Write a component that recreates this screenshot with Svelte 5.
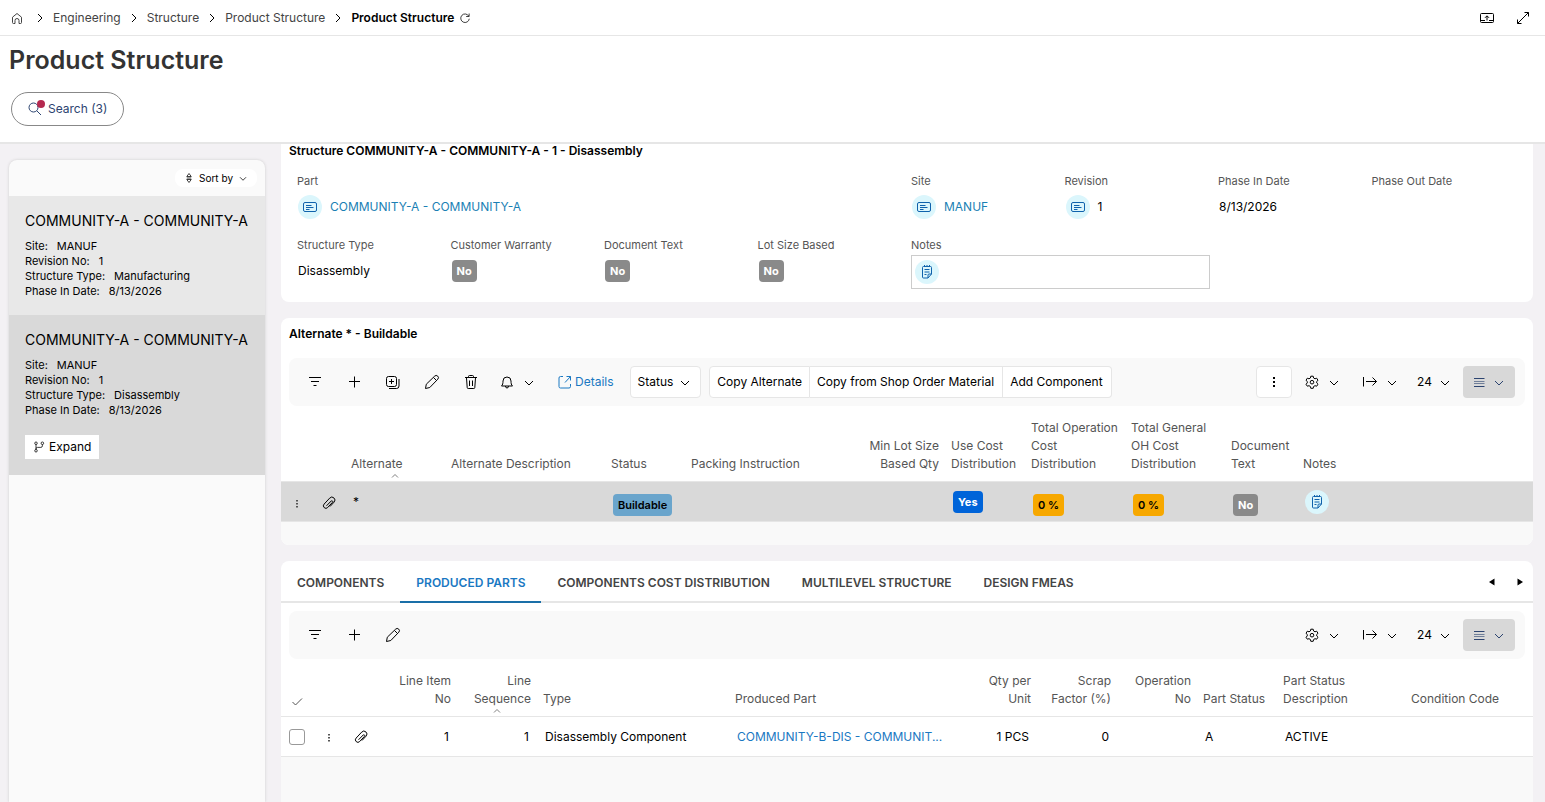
<script>
    const crumbs = ['Engineering', 'Structure', 'Product Structure']

    const cards = [
        { type: 'Manufacturing', active: false },
        { type: 'Disassembly', active: true },
    ]

    const tabs = ['COMPONENTS', 'PRODUCED PARTS', 'COMPONENTS COST DISTRIBUTION', 'MULTILEVEL STRUCTURE', 'DESIGN FMEAS']

    let activeTab = $state('PRODUCED PARTS')
    let notes = $state('')
    let pageSize = $state('24')

    const alternateColumns = [
        { lines: [], width: 32 },
        { lines: [], width: 32 },
        { lines: ['Alternate'], width: 100, sorted: true },
        { lines: ['Alternate Description'], width: 160 },
        { lines: ['Status'], width: 80 },
        { lines: ['Packing Instruction'], width: 160 },
        { lines: ['Min Lot Size', 'Based Qty'], width: 100, right: true },
        { lines: ['Use Cost', 'Distribution'], width: 80 },
        { lines: ['Total Operation', 'Cost', 'Distribution'], width: 100 },
        { lines: ['Total General', 'OH Cost', 'Distribution'], width: 100 },
        { lines: ['Document', 'Text'], width: 72 },
        { lines: ['Notes'] },
    ]

    const partColumns = [
        { lines: [], width: 32, check: true },
        { lines: [], width: 32 },
        { lines: [], width: 32 },
        { lines: ['Line Item', 'No'], width: 80, right: true },
        { lines: ['Line', 'Sequence'], width: 80, right: true, sorted: true },
        { lines: ['Type'], width: 192 },
        { lines: ['Produced Part'], width: 228 },
        { lines: ['Qty per', 'Unit'], width: 80, right: true },
        { lines: ['Scrap', 'Factor (%)'], width: 80, right: true },
        { lines: ['Operation', 'No'], width: 80, right: true },
        { lines: ['Part Status'], width: 80 },
        { lines: ['Part Status', 'Description'], width: 128 },
        { lines: ['Condition Code'] },
    ]
</script>

{#snippet icon(name)}
    <svg class="icon" viewBox="0 0 16 16" aria-hidden="true">
        {#if name === 'home'}
            <path d="M3.500 7.200 8 3.500l4.500 3.700v5.300a1 1 0 0 1-1 1H10V10.500a2 2 0 0 0-4 0v3H4.500a1 1 0 0 1-1-1Z" />
        {:else if name === 'refresh'}
            <path d="M13 5.500A5.700 5.700 0 1 0 13.700 9M13.500 2v4H9.500" />
        {:else if name === 'present'}
            <rect x="1.500" y="3.500" width="13" height="9" rx="1" />
            <path d="M1.500 10.500h4.500M10 10.500h4.500M8 10.500V6M6 7.800 8 5.800l2 2" />
        {:else if name === 'resize'}
            <path d="M2.500 13.500l11-11M9.500 2.500h4v4M2.500 9.500v4h4" />
        {:else if name === 'search'}
            <circle cx="6.500" cy="6.500" r="4.500" />
            <path d="M9.800 9.800 14 14" />
        {:else if name === 'sort'}
            <path d="M5 6 8 2l3 4ZM5 10 8 14l3-4ZM5 8h6" />
        {:else if name === 'branch'}
            <circle cx="4" cy="3" r="1.700" />
            <circle cx="4" cy="13" r="1.700" />
            <circle cx="12.500" cy="3" r="1.700" />
            <path d="M4 4.700v6.600M12.500 4.700v1.800a2 2 0 0 1-2 2H6a2 2 0 0 0-2 2" />
        {:else if name === 'filter'}
            <path d="M2 3.500h12M4 7.500h8M6.500 11.500h3" />
        {:else if name === 'plus'}
            <path d="M8.500 2.500v11M3 7.500h11" />
        {:else if name === 'duplicate'}
            <rect x="1.500" y="2.500" width="10" height="10" rx="2" />
            <path d="M6.500 5v5M4 7.500h5M14 5v7a2.500 2.500 0 0 1-2.500 2.500H4" />
        {:else if name === 'pencil'}
            <path d="M1.500 14.500l.8-4.300 8.300-8a2 2 0 0 1 3.200 3L5.800 13.500ZM9.500 3.500l3 3" />
        {:else if name === 'trash'}
            <path d="M2 3.500h12M5.500 3.500v-1a1 1 0 0 1 1-1h3a1 1 0 0 1 1 1v1M3.500 4l.7 9.500a1 1 0 0 0 1 1h5.600a1 1 0 0 0 1-1L12.500 4M6.500 6.500v5.500M9.500 6.500v5.500" />
        {:else if name === 'bell'}
            <path d="M2.500 12c1.200-1.200 1.500-2.500 1.500-5a4 4 0 0 1 8 0c0 2.500.3 3.800 1.500 5ZM6.500 12a1.500 2 0 0 0 3 0" />
        {:else if name === 'external'}
            <path d="M6 2.500H3.500a1.500 1.500 0 0 0-1.500 1.500v8.500A1.500 1.500 0 0 0 3.500 14H12a1.500 1.500 0 0 0 1.500-1.500V10M8 8.500 13.500 2.500M9.500 2.500h4v4" />
        {:else if name === 'down'}
            <path d="M4 7l4 4 4-4" />
        {:else if name === 'up'}
            <path d="M4 10 8 6l4 4" />
        {:else if name === 'right'}
            <path d="M6 4l4 4-4 4" />
        {:else if name === 'check'}
            <path d="M3.500 10l3 3 6.500-6.500" />
        {:else if name === 'kebab'}
            <path class="solid" d="M7 3h2v2H7ZM7 7h2v2H7ZM7 11h2v2H7Z" />
        {:else if name === 'dots'}
            <path class="solid" d="M7 5h2v1.500H7ZM7 8h2v1.500H7ZM7 11h2v1.500H7Z" />
        {:else if name === 'gear'}
            <path d="M6.800 2.200h2.400l.4 1.800 1.400.8 1.700-.6 1.300 2.100L12.700 7.500v1.400l1.300 1.300-1.300 2-1.700-.5-1.400.8-.4 1.800H6.800l-.4-1.800-1.400-.8-1.700.5-1.300-2 1.300-1.300V7.500L2 6.300l1.300-2.100 1.700.6 1.400-.8Z" />
            <circle cx="8" cy="8.200" r="1.800" />
        {:else if name === 'export'}
            <path d="M1.500 3v9.500M4 7.500h10.500M10.500 3.500l4 4-4 4" />
        {:else if name === 'list'}
            <path d="M3 4.500h10.500M3 12.500h10.500" />
            <path class="faint" d="M3 7.500h10.500M3 9.500h10.500" />
        {:else if name === 'clip'}
            <path d="M5.500 10.800 10.200 6a.9.9 0 0 1 1.300 1.300L6.700 12.500a2.400 2.400 0 0 1-3.600-3.400L8.700 3.100a2.900 2.900 0 0 1 4.400 4L9 11.500" />
        {:else if name === 'card'}
            <rect x="1.500" y="3.500" width="13" height="9" rx="1.500" />
            <path d="M4 6.500h5.500M4 8.500h7.500M4 10.500h3.500" />
        {:else if name === 'note'}
            <path d="M12.500 10V3.500a1 1 0 0 0-1-1h-7a1 1 0 0 0-1 1v9.500a1 1 0 0 0 1 1H9ZM12.500 10H10a1 1 0 0 0-1 1v3M5.500 1v2M8 1v2M10.500 1v2M5.500 5.500h5M5.500 8h5M5.500 10.500h2" />
        {:else if name === 'prev'}
            <path class="solid" d="M10.500 4.500v7L5 8Z" />
        {:else if name === 'next'}
            <path class="solid" d="M5.500 4.500v7L11 8Z" />
        {/if}
    </svg>
{/snippet}

{#snippet iconButton(name, label)}
    <button class="tool" aria-label={label}>{@render icon(name)}</button>
{/snippet}

{#snippet viewTools()}
    <button class="menu" aria-label="Settings">{@render icon('gear')}{@render icon('down')}</button>
    <button class="menu" aria-label="Export">{@render icon('export')}{@render icon('down')}</button>
    <label class="page-size">
        <select bind:value={pageSize} aria-label="Rows per page">
            <option>24</option>
            <option>48</option>
        </select>
        {@render icon('down')}
    </label>
    <button class="menu view" aria-label="View">{@render icon('list')}{@render icon('down')}</button>
{/snippet}

{#snippet tableHead(columns)}
    <colgroup>
        {#each columns as column}
            <col style={column.width ? `width: ${column.width}px` : undefined} />
        {/each}
    </colgroup>
    <thead>
        <tr>
            {#each columns as column}
                <th class:right={column.right} class:check={column.check}>
                    {#each column.lines as line}
                        <span class="line">{line}</span>
                    {/each}
                    {#if column.check}
                        {@render icon('check')}
                    {/if}
                    {#if column.sorted}
                        <span class="sorted">{@render icon('up')}</span>
                    {/if}
                </th>
            {/each}
        </tr>
    </thead>
{/snippet}

<div class="page">
    <header>
        <nav class="breadcrumb">
            <a class="home" href="#home" aria-label="Home">{@render icon('home')}</a>
            {#each crumbs as crumb}
                {@render icon('right')}
                <a href="#crumb">{crumb}</a>
            {/each}
            {@render icon('right')}
            <strong>Product Structure</strong>
            <button class="refresh" aria-label="Refresh">{@render icon('refresh')}</button>
            <div class="window-tools">
                <button aria-label="Present">{@render icon('present')}</button>
                <button aria-label="Full screen">{@render icon('resize')}</button>
            </div>
        </nav>
        <h1>Product Structure</h1>
        <button class="search">
            <span class="search-icon">{@render icon('search')}<i class="dot"></i></span>
            Search (3)
        </button>
    </header>

    <div class="content">
        <aside>
            <div class="sort-bar">
                <button class="sort">{@render icon('sort')}<span>Sort by</span>{@render icon('down')}</button>
            </div>
            {#each cards as card}
                <div class="card" class:active={card.active}>
                    <h3>COMMUNITY-A - COMMUNITY-A</h3>
                    <dl>
                        <div><dt>Site:</dt><dd>MANUF</dd></div>
                        <div><dt>Revision No:</dt><dd>1</dd></div>
                        <div><dt>Structure Type:</dt><dd>{card.type}</dd></div>
                        <div><dt>Phase In Date:</dt><dd>8/13/2026</dd></div>
                    </dl>
                    {#if card.active}
                        <button class="expand">{@render icon('branch')}Expand</button>
                    {/if}
                </div>
            {/each}
        </aside>

        <main>
            <section class="panel details">
                <h2>Structure COMMUNITY-A - COMMUNITY-A - 1 - Disassembly</h2>
                <div class="fields">
                    <div class="field wide">
                        <span class="label">Part</span>
                        <div class="value">
                            <button class="round" aria-label="Part card">{@render icon('card')}</button>
                            <a href="#part">COMMUNITY-A - COMMUNITY-A</a>
                        </div>
                    </div>
                    <div class="field">
                        <span class="label">Site</span>
                        <div class="value">
                            <button class="round" aria-label="Site card">{@render icon('card')}</button>
                            <a href="#site">MANUF</a>
                        </div>
                    </div>
                    <div class="field">
                        <span class="label">Revision</span>
                        <div class="value">
                            <button class="round" aria-label="Revision card">{@render icon('card')}</button>
                            <span>1</span>
                        </div>
                    </div>
                    <div class="field">
                        <span class="label">Phase In Date</span>
                        <div class="value">8/13/2026</div>
                    </div>
                    <div class="field">
                        <span class="label">Phase Out Date</span>
                    </div>
                    <div class="field">
                        <span class="label">Structure Type</span>
                        <div class="value">Disassembly</div>
                    </div>
                    {#each ['Customer Warranty', 'Document Text', 'Lot Size Based'] as label}
                        <div class="field">
                            <span class="label">{label}</span>
                            <div class="value"><span class="badge grey">No</span></div>
                        </div>
                    {/each}
                    <div class="field notes">
                        <label class="label" for="notes">Notes</label>
                        <div class="notes-box">
                            <button class="round" aria-label="Open notes">{@render icon('note')}</button>
                            <input id="notes" type="text" bind:value={notes} />
                        </div>
                    </div>
                </div>
            </section>

            <section class="panel alternate">
                <h2>Alternate * - Buildable</h2>
                <div class="toolbar">
                    {@render iconButton('filter', 'Filter')}
                    {@render iconButton('plus', 'New')}
                    {@render iconButton('duplicate', 'Duplicate')}
                    {@render iconButton('pencil', 'Edit')}
                    {@render iconButton('trash', 'Delete')}
                    <button class="menu bell" aria-label="Subscribe">{@render icon('bell')}{@render icon('down')}</button>
                    <a class="details-link" href="#details">{@render icon('external')}Details</a>
                    <button class="boxed status">Status {@render icon('down')}</button>
                    <div class="group">
                        <button class="boxed">Copy Alternate</button>
                        <button class="boxed">Copy from Shop Order Material</button>
                        <button class="boxed">Add Component</button>
                    </div>
                    <div class="view-tools">
                        <button class="boxed more" aria-label="More">{@render icon('kebab')}</button>
                        {@render viewTools()}
                    </div>
                </div>
                <table>
                    {@render tableHead(alternateColumns)}
                    <tbody>
                        <tr class="selected">
                            <td><button class="row-menu" aria-label="Row menu">{@render icon('dots')}</button></td>
                            <td><button aria-label="Attachments">{@render icon('clip')}</button></td>
                            <td>*</td>
                            <td></td>
                            <td class="low"><span class="badge blue">Buildable</span></td>
                            <td></td>
                            <td></td>
                            <td><span class="badge yes">Yes</span></td>
                            <td class="low"><span class="badge amber">0 %</span></td>
                            <td class="low"><span class="badge amber">0 %</span></td>
                            <td class="low"><span class="badge grey">No</span></td>
                            <td><button class="round" aria-label="Notes">{@render icon('note')}</button></td>
                        </tr>
                    </tbody>
                </table>
                <div class="rest"></div>
            </section>

            <section class="panel parts">
                <div class="tabs">
                    {#each tabs as tab}
                        <button class="tab" class:current={tab === activeTab} onclick={() => activeTab = tab}>{tab}</button>
                    {/each}
                    <div class="tab-arrows">
                        <button aria-label="Previous tab">{@render icon('prev')}</button>
                        <button aria-label="Next tab">{@render icon('next')}</button>
                    </div>
                </div>
                <div class="toolbar">
                    {@render iconButton('filter', 'Filter')}
                    {@render iconButton('plus', 'New')}
                    {@render iconButton('pencil', 'Edit')}
                    <div class="view-tools">
                        {@render viewTools()}
                    </div>
                </div>
                <table>
                    {@render tableHead(partColumns)}
                    <tbody>
                        <tr>
                            <td><input type="checkbox" aria-label="Select row" /></td>
                            <td><button class="row-menu" aria-label="Row menu">{@render icon('dots')}</button></td>
                            <td><button aria-label="Attachments">{@render icon('clip')}</button></td>
                            <td class="right">1</td>
                            <td class="right">1</td>
                            <td>Disassembly Component</td>
                            <td><a href="#produced">COMMUNITY-B-DIS - COMMUNIT...</a></td>
                            <td class="right">1 PCS</td>
                            <td class="right">0</td>
                            <td></td>
                            <td>A</td>
                            <td>ACTIVE</td>
                            <td></td>
                        </tr>
                    </tbody>
                </table>
                <div class="rest"></div>
            </section>
        </main>
    </div>
</div>

<style>
    :global(body){
        background: #f3f1f4;
    }
    .page{
        min-height: 100vh;
        display: flex;
        flex-direction: column;
        font-family: Inter, "Liberation Sans", sans-serif;
        font-size: 12px;
        line-height: 18px;
        color: #000;
    }
    .page, .page *{
        box-sizing: border-box;
    }
    button, input, select{
        font: inherit;
        color: inherit;
    }
    button{
        display: inline-flex;
        align-items: center;
        justify-content: center;
        padding: 0;
        border: 0;
        background: none;
        white-space: nowrap;
        cursor: pointer;
    }
    a{
        color: #1a7fb4;
        text-decoration: none;
    }
    h1, h2, h3, dl, dd{
        margin: 0;
    }
    .icon{
        width: 16px;
        height: 16px;
        flex: none;
        fill: none;
        stroke: currentColor;
        stroke-width: 1;
    }
    .icon .solid{
        fill: currentColor;
        stroke: none;
    }
    .icon .faint{
        opacity: .6;
    }

    /* header */
    header{
        background: #fff;
        border-bottom: 2px solid #e6e6e6;
        padding-bottom: 16px;
    }
    .breadcrumb{
        height: 36px;
        display: flex;
        align-items: center;
        gap: 5px;
        padding: 0 14px 0 9px;
        border-bottom: 1px solid #e6e6e6;
    }
    .breadcrumb a{
        display: flex;
        color: #444;
    }
    .breadcrumb .home{
        margin-right: 2px;
    }
    .breadcrumb strong{
        font-weight: 600;
    }
    .refresh .icon{
        width: 12px;
        height: 12px;
    }
    .window-tools{
        margin-left: auto;
        display: flex;
        gap: 20px;
    }
    h1{
        padding: 8px 9px;
        font-size: 25px;
        line-height: 32px;
        font-weight: 600;
        color: #333;
    }
    .search{
        height: 34px;
        margin: 8px 0 0 11px;
        padding: 0 16px 0 15px;
        gap: 5px;
        border: 1px solid #888;
        border-radius: 17px;
        color: #2c4470;
    }
    .search-icon{
        position: relative;
        display: flex;
    }
    .dot{
        position: absolute;
        top: -1px;
        right: -2px;
        width: 8px;
        height: 8px;
        border-radius: 50%;
        background: #b5294f;
    }

    /* list of structures */
    .content{
        flex: 1;
        display: flex;
        gap: 16px;
        padding: 0 12px 0 9px;
    }
    aside{
        flex: none;
        width: 256px;
        margin-top: 16px;
        border-radius: 8px 8px 0 0;
        background: #fafafa;
        box-shadow: 0 0 3px #ccc;
    }
    .sort-bar{
        height: 36px;
        display: flex;
        align-items: center;
        justify-content: flex-end;
        padding: 0 8px;
    }
    .sort{
        height: 18px;
        padding: 0 8px;
        gap: 4px;
        border-radius: 8px;
        background: #fff;
        font-size: 10px;
    }
    .sort .icon{
        width: 12px;
        height: 12px;
    }
    .card{
        padding: 16px;
        background: #e8e8e8;
    }
    .card.active{
        background: #d9d9d9;
    }
    h3{
        font-size: 14px;
        line-height: 18px;
        font-weight: 400;
        white-space: nowrap;
    }
    dl{
        padding-top: 9px;
        font-size: 11px;
        line-height: 15px;
    }
    dl div{
        display: flex;
        gap: 9px;
    }
    .expand{
        height: 24px;
        margin-top: 17px;
        padding: 0 8px;
        gap: 4px;
        background: #fff;
    }
    .expand .icon{
        width: 12px;
        height: 12px;
    }

    /* panels */
    main{
        flex: 1;
        min-width: 0;
        display: flex;
        flex-direction: column;
        gap: 16px;
    }
    .panel{
        background: #fff;
        border-radius: 8px;
        overflow: hidden;
    }
    .panel.details{
        border-radius: 0 0 8px 8px;
        padding-bottom: 10px;
    }
    h2{
        padding: 0 8px;
        font-size: 12px;
        line-height: 14px;
        font-weight: 600;
    }
    .alternate h2{
        padding-top: 9px;
        padding-bottom: 17px;
    }
    .fields{
        display: grid;
        grid-template-columns: repeat(8, 1fr);
        grid-auto-rows: 56px;
        row-gap: 8px;
        padding: 14px 8px 0 16px;
    }
    .field.wide{
        grid-column: span 4;
    }
    .field.notes{
        grid-column: span 2;
        padding-right: 8px;
    }
    .label{
        display: block;
        font-size: 11px;
        line-height: 18px;
        color: #555;
    }
    .value{
        display: flex;
        align-items: center;
        gap: 8px;
        height: 34px;
        padding-left: 1px;
    }
    .round{
        width: 24px;
        height: 24px;
        flex: none;
        border-radius: 50%;
        background: #dbf6fc;
        color: #0f62ac;
    }
    .notes-box{
        display: flex;
        align-items: center;
        height: 34px;
        margin-top: 1px;
        padding-left: 3px;
        border: 1px solid #ccc;
    }
    .notes-box input{
        flex: 1;
        min-width: 0;
        border: 0;
        outline: 0;
        background: none;
    }
    .badge{
        display: inline-block;
        padding: 0 5px;
        border-radius: 4px;
        font-size: 11px;
        line-height: 22px;
        font-weight: 700;
    }
    .grey{
        background: #8a8a8a;
        color: #fff;
    }
    .blue{
        background: #6aa5cc;
        font-weight: 600;
    }
    .yes{
        background: #0064d9;
        color: #fff;
    }
    .amber{
        background: #f7a800;
        font-weight: 600;
    }

    /* toolbars */
    .toolbar{
        display: flex;
        align-items: center;
        gap: 1px;
        height: 48px;
        margin: 0 8px;
        padding: 0 10px 0 7px;
        border-radius: 8px;
        background: #f9f9f9;
    }
    .tool{
        width: 38px;
        height: 32px;
    }
    .menu{
        height: 32px;
        gap: 6px;
    }
    .bell{
        margin-left: 8px;
    }
    .details-link{
        display: flex;
        align-items: center;
        gap: 2px;
        margin: 0 15px 0 19px;
        color: #1a78c2;
    }
    .boxed{
        height: 32px;
        padding: 0 7px;
        border: 1px solid #e6e6e6;
        border-radius: 4px;
        background: #fff;
    }
    .status{
        gap: 4px;
        margin-right: 7px;
    }
    .group{
        display: flex;
    }
    .group .boxed{
        border-radius: 0;
    }
    .group .boxed + .boxed{
        border-left: 0;
        padding: 0 8px 0 7px;
    }
    .group .boxed:first-child{
        border-radius: 4px 0 0 4px;
    }
    .group .boxed:last-child{
        border-radius: 0 4px 4px 0;
    }
    .view-tools{
        margin-left: auto;
        display: flex;
        align-items: center;
        gap: 20px;
    }
    .more{
        width: 36px;
        margin-right: -8px;
    }
    .page-size{
        display: flex;
        align-items: center;
        gap: 3px;
        margin-left: -3px;
    }
    .page-size select{
        appearance: none;
        width: 17px;
        padding: 0;
        border: 0;
        background: none;
    }
    .view{
        width: 52px;
        margin-left: -10px;
        gap: 4px;
        border-radius: 4px;
        background: #d8d8d8;
        color: #2c4470;
    }

    /* tables */
    table{
        width: 100%;
        table-layout: fixed;
        border-collapse: collapse;
    }
    th{
        position: relative;
        height: 58px;
        padding: 0 6px 8px;
        vertical-align: bottom;
        text-align: left;
        font-weight: 400;
        color: #555;
        white-space: nowrap;
    }
    .alternate th{
        height: 75px;
    }
    th.check{
        padding: 0 8px 3px;
    }
    .line{
        display: block;
    }
    .sorted{
        position: absolute;
        left: 0;
        right: 0;
        bottom: -1px;
        display: flex;
        justify-content: center;
    }
    .sorted .icon{
        width: 12px;
        height: 12px;
    }
    td{
        height: 40px;
        padding: 0 8px;
        border-top: 1px solid #e6e6e6;
        border-bottom: 1px solid #e6e6e6;
        white-space: nowrap;
    }
    td a{
        color: #1a78c2;
    }
    th.right, td.right{
        text-align: right;
    }
    .selected td{
        padding-top: 2px;
    }
    .selected td.low{
        padding-top: 8px;
    }
    td button{
        vertical-align: middle;
    }
    .selected{
        background: #d9d9d9;
    }
    .row-menu{
        color: #555;
    }
    input[type="checkbox"]{
        appearance: none;
        display: block;
        width: 16px;
        height: 16px;
        margin: 0;
        border: 1px solid #999;
        border-radius: 3px;
        background: #fff;
    }
    .rest{
        height: 23px;
        background: #f9f9f9;
    }

    /* tabs */
    .tabs{
        display: flex;
        height: 42px;
        margin-bottom: 8px;
        border-bottom: 2px solid #e6e6e6;
    }
    .tab{
        height: 42px;
        padding: 5px 16px 0;
        border-bottom: 2px solid transparent;
        font-weight: 600;
        color: #444;
    }
    .tab.current{
        border-color: #1a6fa8;
        color: #1a78c2;
    }
    .tab-arrows{
        margin-left: auto;
        display: flex;
        gap: 12px;
        padding: 3px 5px 0 0;
    }
    .parts{
        flex: 1;
        display: flex;
        flex-direction: column;
        border-radius: 8px 8px 0 0;
    }
    .parts .rest{
        flex: 1;
    }
</style>
